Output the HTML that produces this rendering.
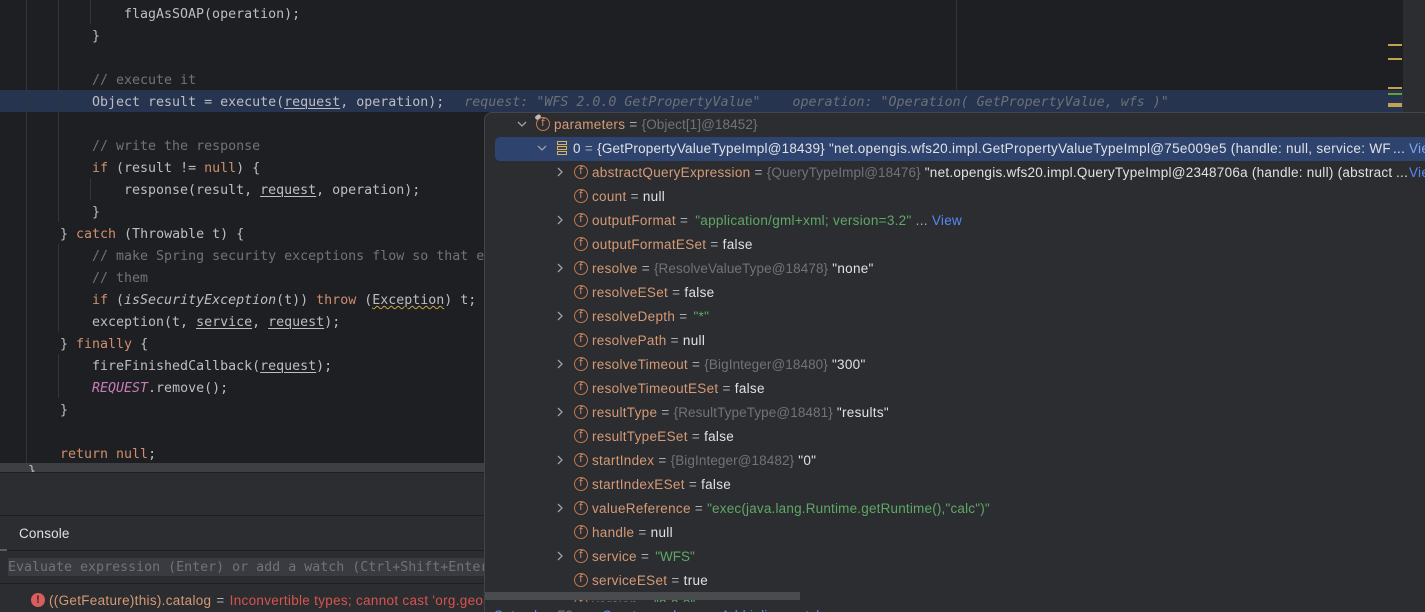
<!DOCTYPE html>
<html><head><meta charset="utf-8"><style>
html,body{margin:0;padding:0;width:1425px;height:612px;overflow:hidden;background:#1e1f22}
div,span{box-sizing:border-box}
.a{position:absolute}
#code{position:absolute;left:0;top:0;width:1403px;height:463px;overflow:hidden;background:#1e1f22;font:13.3px/22px "DejaVu Sans Mono",monospace;color:#bcbec4;white-space:pre}
.l{position:absolute;height:22px;white-space:pre;margin-top:2px}
.k{color:#cf8e6d}.c{color:#6f737a}.u{text-decoration:underline;text-decoration-color:#bcbec4;text-underline-offset:2px;text-decoration-thickness:1px}
.p{color:#c77dbb;font-style:italic}.i{font-style:italic}
.h{color:#6b7079;font-style:italic;margin-left:20px}
.w{text-decoration:underline wavy #c9a34e 1px}
#pop{position:absolute;left:484px;top:112px;width:941px;height:500px;background:#2b2d30;border-top:1px solid #43454a;border-left:1px solid #43454a;border-top-left-radius:8px;overflow:hidden;font:13.5px/24px "Liberation Sans",sans-serif;color:#dfe1e5;white-space:pre;letter-spacing:.3px}
.r{position:absolute;left:0;width:941px;height:24px}
.t{position:absolute;top:1px;left:107px}
.n{color:#d69a76}.g{color:#6f737a;letter-spacing:.1px}.s{color:#5fa866}.v{color:#dfe1e5}.e{color:#a9adb5}.b{color:#548af7}
.f{position:absolute;left:89px;top:5px;width:14px;height:14px;border:1.4px solid #c5784e;border-radius:50%;color:#d08a60;font:normal 10.5px/11px "DejaVu Sans",sans-serif;text-align:center;letter-spacing:0}
.ar{position:absolute;left:70px;top:7px}
</style></head><body>
<div id="code">
<div class="a" style="left:0;top:90px;width:1403px;height:22px;background:#27344f"></div>
<div class="a" style="left:26px;top:0;width:1px;height:463px;background:#313438"></div>
<div class="a" style="left:58px;top:0;width:1px;height:222px;background:#313438"></div>
<div class="a" style="left:58px;top:244px;width:1px;height:88px;background:#313438"></div>
<div class="a" style="left:58px;top:354px;width:1px;height:44px;background:#313438"></div>
<div class="a" style="left:90px;top:0;width:1px;height:24px;background:#313438"></div>
<div class="a" style="left:90px;top:178px;width:1px;height:22px;background:#313438"></div>
<div class="a" style="left:956px;top:0;width:1px;height:90px;background:#313438"></div>
<div class="l" style="left:124px;top:2px">flagAsSOAP(operation);</div>
<div class="l" style="left:92px;top:24px">}</div>
<div class="l c" style="left:92px;top:68px">// execute it</div>
<div class="l" style="left:92px;top:90px">Object result = execute(<span class="u">request</span>, operation);<span class="h">request: "WFS 2.0.0 GetPropertyValue"    operation: "Operation( GetPropertyValue, wfs )"</span></div>
<div class="l c" style="left:92px;top:134px">// write the response</div>
<div class="l" style="left:92px;top:156px"><span class="k">if</span> (result != <span class="k">null</span>) {</div>
<div class="l" style="left:124px;top:178px">response(result, <span class="u">request</span>, operation);</div>
<div class="l" style="left:92px;top:200px">}</div>
<div class="l" style="left:60px;top:222px">} <span class="k">catch</span> (Throwable t) {</div>
<div class="l c" style="left:92px;top:244px">// make Spring security exceptions flow so that e</div>
<div class="l c" style="left:92px;top:266px">// them</div>
<div class="l" style="left:92px;top:288px"><span class="k">if</span> (<span class="i">isSecurityException</span>(t)) <span class="k">throw</span> (<span class="w">Exception</span>) t;</div>
<div class="l" style="left:92px;top:310px">exception(t, <span class="u">service</span>, <span class="u">request</span>);</div>
<div class="l" style="left:60px;top:332px">} <span class="k">finally</span> {</div>
<div class="l" style="left:92px;top:354px">fireFinishedCallback(<span class="u">request</span>);</div>
<div class="l" style="left:92px;top:376px"><span class="p">REQUEST</span>.remove();</div>
<div class="l" style="left:60px;top:398px">}</div>
<div class="l k" style="left:60px;top:442px">return null<span style="color:#bcbec4">;</span></div>
<div class="a" style="left:1388px;top:44px;width:14px;height:2px;background:#c4a052"></div>
<div class="a" style="left:1388px;top:58px;width:14px;height:2px;background:#c4a052"></div>
<div class="a" style="left:1388px;top:87px;width:14px;height:2px;background:#c4a052"></div>
<div class="a" style="left:1388px;top:93px;width:14px;height:2px;background:#6f9e2e"></div>
<div class="a" style="left:1388px;top:103px;width:14px;height:4px;background:#c4a052"></div>
</div>
<div class="a" style="left:1403px;top:0;width:22px;height:112px;background:#2b2d30"></div>
<div class="a" style="left:0;top:463px;width:484px;height:149px;background:#2b2d30"></div>
<div class="a" style="left:0;top:463px;width:484px;height:9px;background:#3e3f42"></div>
<div class="a" style="left:28px;top:465px;width:8px;height:7px;overflow:hidden;color:#bcbec4;font:13.3px/14px 'DejaVu Sans Mono',monospace">}</div>
<div class="a" style="left:0;top:472px;width:484px;height:1px;background:#1e1f22"></div>
<div class="a" style="left:0;top:515px;width:484px;height:1px;background:#1e1f22"></div>
<div class="a" style="left:19px;top:525px;font:13.5px/18px 'Liberation Sans',sans-serif;letter-spacing:.15px;color:#dfe1e5">Console</div>
<div class="a" style="left:0;top:550px;width:484px;height:1px;background:#1e1f22"></div>
<div class="a" style="left:0;top:549px;width:7px;height:2px;background:#5a5d63"></div>
<div class="a" style="left:8px;top:558px;width:476px;height:18px;background:#393b40;font:13.3px/19px 'DejaVu Sans Mono',monospace;color:#6f737a;white-space:pre;overflow:hidden">Evaluate expression (Enter) or add a watch (Ctrl+Shift+Enter)</div>
<div class="a" style="left:0;top:583px;width:484px;height:1px;background:#1e1f22"></div>
<div class="a" style="left:31px;top:593px;width:14px;height:14px;border-radius:50%;background:#db5c5c;color:#2b2d30;font:bold 11px/14px 'Liberation Sans',sans-serif;text-align:center">!</div>
<div class="a" style="left:49px;top:592px;width:435px;height:18px;overflow:hidden;font:13.5px/18px 'Liberation Sans',sans-serif;letter-spacing:.3px;white-space:pre;color:#d69a76">((GetFeature)this).catalog <span class="e" style="margin:0 1px">=</span> <span style="color:#d9534f">Inconvertible types; cannot cast 'org.geoserver</span></div>

<div id="pop">
<div class="r" style="left:10px;top:24px;width:931px;background:#2e436e;border-radius:5px 0 0 5px"></div>

<div class="r" style="top:-1px"><svg class="ar" style="left:32px" width="10" height="10"><path d="M1 3l4 4 4-4" fill="none" stroke="#9da0a8" stroke-width="1.3"/></svg><div class="f" style="left:51px">f</div><div class="a" style="left:50px;top:3px;width:6px;height:4px;background:#bbb;border-radius:2px;transform:rotate(-35deg)"></div><span class="t" style="left:69px"><span class="n">parameters</span> <span class="e">=</span> <span class="g">{Object[1]@18452}</span></span></div>

<div class="r" style="top:23px"><svg class="ar" style="left:52px" width="10" height="10"><path d="M1 3l4 4 4-4" fill="none" stroke="#9da0a8" stroke-width="1.3"/></svg>
<div class="a" style="left:72px;top:5px;width:10px;height:4px;border:1px solid #e0b34f"></div><div class="a" style="left:72px;top:10px;width:10px;height:4px;border:1px solid #e0b34f"></div><div class="a" style="left:72px;top:15px;width:10px;height:4px;border:1px solid #e0b34f"></div>
<span class="t" style="left:88px"><span class="v">0</span> <span class="e">=</span> <span class="v" style="letter-spacing:.2px">{GetPropertyValueTypeImpl@18439}</span> <span class="v">"net.opengis.wfs20.impl.GetPropertyValueTypeImpl@75e009e5 (handle: null, service: WF</span></span><span class="t" style="left:908px;color:#dfe1e5">...</span><span class="t b" style="left:924px;color:#7ea6f5">View</span></div>

<div class="r" style="top:47px"><svg class="ar" width="10" height="10"><path d="M3 1l4 4-4 4" fill="none" stroke="#9da0a8" stroke-width="1.3"/></svg><div class="f">f</div><span class="t"><span class="n">abstractQueryExpression</span> <span class="e">=</span> <span class="g">{QueryTypeImpl@18476}</span> <span class="v" style="letter-spacing:.26px">"net.opengis.wfs20.impl.QueryTypeImpl@2348706a (handle: null) (abstract</span></span><span class="t" style="left:911px">...</span><span class="t b" style="left:924px">View</span></div>
<div class="r" style="top:71px"><div class="f">f</div><span class="t"><span class="n">count</span> <span class="e">=</span> <span class="v">null</span></span></div>
<div class="r" style="top:95px"><svg class="ar" width="10" height="10"><path d="M3 1l4 4-4 4" fill="none" stroke="#9da0a8" stroke-width="1.3"/></svg><div class="f">f</div><span class="t"><span class="n">outputFormat</span> <span class="e">=</span> <span class="s" style="margin-left:3px">"application/gml+xml; version=3.2"</span> <span class="e">...</span> <span class="b">View</span></span></div>
<div class="r" style="top:119px"><div class="f">f</div><span class="t"><span class="n">outputFormatESet</span> <span class="e">=</span> <span class="v">false</span></span></div>
<div class="r" style="top:143px"><svg class="ar" width="10" height="10"><path d="M3 1l4 4-4 4" fill="none" stroke="#9da0a8" stroke-width="1.3"/></svg><div class="f">f</div><span class="t"><span class="n">resolve</span> <span class="e">=</span> <span class="g">{ResolveValueType@18478}</span> <span class="v">"none"</span></span></div>
<div class="r" style="top:167px"><div class="f">f</div><span class="t"><span class="n">resolveESet</span> <span class="e">=</span> <span class="v">false</span></span></div>
<div class="r" style="top:191px"><svg class="ar" width="10" height="10"><path d="M3 1l4 4-4 4" fill="none" stroke="#9da0a8" stroke-width="1.3"/></svg><div class="f">f</div><span class="t"><span class="n">resolveDepth</span> <span class="e">=</span> <span class="s" style="margin-left:2px">"*"</span></span></div>
<div class="r" style="top:215px"><div class="f">f</div><span class="t"><span class="n">resolvePath</span> <span class="e">=</span> <span class="v">null</span></span></div>
<div class="r" style="top:239px"><svg class="ar" width="10" height="10"><path d="M3 1l4 4-4 4" fill="none" stroke="#9da0a8" stroke-width="1.3"/></svg><div class="f">f</div><span class="t"><span class="n">resolveTimeout</span> <span class="e">=</span> <span class="g">{BigInteger@18480}</span> <span class="v">"300"</span></span></div>
<div class="r" style="top:263px"><div class="f">f</div><span class="t"><span class="n">resolveTimeoutESet</span> <span class="e">=</span> <span class="v">false</span></span></div>
<div class="r" style="top:287px"><svg class="ar" width="10" height="10"><path d="M3 1l4 4-4 4" fill="none" stroke="#9da0a8" stroke-width="1.3"/></svg><div class="f">f</div><span class="t"><span class="n">resultType</span> <span class="e">=</span> <span class="g">{ResultTypeType@18481}</span> <span class="v">"results"</span></span></div>
<div class="r" style="top:311px"><div class="f">f</div><span class="t"><span class="n">resultTypeESet</span> <span class="e">=</span> <span class="v">false</span></span></div>
<div class="r" style="top:335px"><svg class="ar" width="10" height="10"><path d="M3 1l4 4-4 4" fill="none" stroke="#9da0a8" stroke-width="1.3"/></svg><div class="f">f</div><span class="t"><span class="n">startIndex</span> <span class="e">=</span> <span class="g">{BigInteger@18482}</span> <span class="v">"0"</span></span></div>
<div class="r" style="top:359px"><div class="f">f</div><span class="t"><span class="n">startIndexESet</span> <span class="e">=</span> <span class="v">false</span></span></div>
<div class="r" style="top:383px"><svg class="ar" width="10" height="10"><path d="M3 1l4 4-4 4" fill="none" stroke="#9da0a8" stroke-width="1.3"/></svg><div class="f">f</div><span class="t"><span class="n">valueReference</span> <span class="e">=</span> <span class="s" style="letter-spacing:.19px">"exec(java.lang.Runtime.getRuntime(),"calc")"</span></span></div>
<div class="r" style="top:407px"><div class="f">f</div><span class="t"><span class="n">handle</span> <span class="e">=</span> <span class="v">null</span></span></div>
<div class="r" style="top:431px"><svg class="ar" width="10" height="10"><path d="M3 1l4 4-4 4" fill="none" stroke="#9da0a8" stroke-width="1.3"/></svg><div class="f">f</div><span class="t"><span class="n">service</span> <span class="e">=</span> <span class="s" style="margin-left:2px;letter-spacing:0">"WFS"</span></span></div>
<div class="r" style="top:455px"><div class="f">f</div><span class="t"><span class="n">serviceESet</span> <span class="e">=</span> <span class="v">true</span></span></div>
<div class="r" style="top:479px"><div class="f">f</div><span class="t"><span class="n">version</span> <span class="e">=</span> <span class="s">"2.0.0"</span></span></div>
<div class="a" style="left:0;top:489px;width:941px;height:20px;background:#2b2d30"></div>
<div class="a" style="left:0;top:479px;width:315px;height:8px;background:#4a4b4e"></div>
<div class="a" style="left:9px;top:491px;line-height:24px"><span class="b">Set value</span> <span class="g">F2</span></div>
<div class="a b" style="left:117px;top:491px">Create renderer</div>
<div class="a b" style="left:236px;top:491px">Add inline watch</div>
</div>
</body></html>
